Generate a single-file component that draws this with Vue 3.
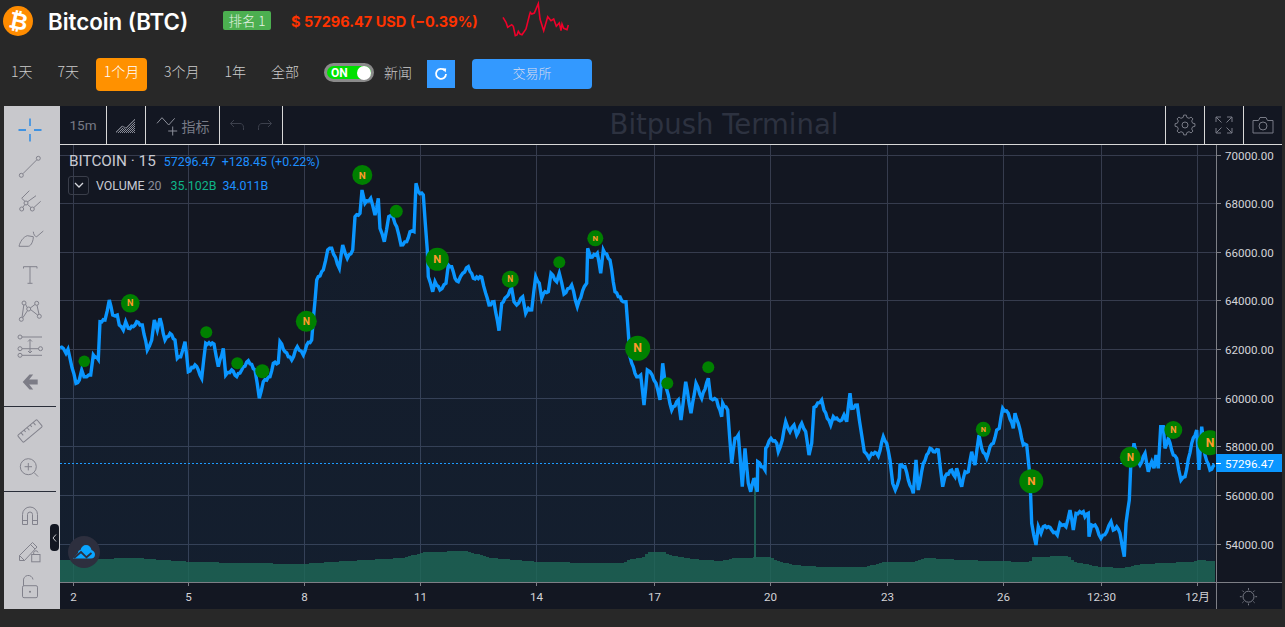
<script setup>
const z6 = [[0,533],[10,535],[18,550],[24,538],[30,565],[48,640],[58,630],[65,600],[72,620],[80,620],[92,615],[100,555],[115,568],[120,455],[135,450],[148,390],[158,435],[172,435],[178,465],[190,480],[197,455],[205,475],[220,470],[230,455],[240,465],[247,465],[262,540],[275,510],[283,450],[292,480],[300,445],[315,510],[330,490],[345,510],[352,565],[362,560],[375,515],[385,605],[405,585],[415,600],[425,625],[437,520],[462,522],[475,590],[490,535],[497,615],[515,600],[530,620],[545,600],[565,572],[585,600],[598,685],[610,635],[630,620],[640,580],[655,578],[660,515],[675,545],[695,570],[712,530],[730,555],[740,525],[755,510],[770,330],[790,300],[803,240],[815,235],[838,295],[848,225],[862,265],[878,240],[885,140]]
const z7 = [[60,130],[66,60],[75,100],[92,85],[105,135],[115,85],[120,175],[133,215],[146,140],[155,135],[170,170],[183,225],[200,215],[210,185],[222,185],[228,40],[235,65],[250,75],[262,240],[265,320],[278,365],[285,335],[300,360],[318,340],[325,285],[335,290],[345,325],[355,335],[368,310],[385,290],[400,325],[425,322],[437,370],[447,405],[462,395],[477,482],[485,400],[500,380],[515,355],[522,395],[530,405],[548,380],[557,430],[565,415],[575,420],[587,320],[598,340],[605,385],[615,365],[625,365],[633,310],[650,335],[658,310],[672,372],[695,345],[712,410],[733,350],[740,340],[743,235],[752,262],[772,250],[782,310],[790,240],[810,270],[825,365],[850,395],[858,395],[870,560],[885,610]]
const z8 = [[50,170],[62,165],[72,255],[82,150],[90,155],[108,190],[120,240],[128,130],[135,185],[155,270],[175,240],[183,300],[197,185],[213,280],[228,190],[245,235],[265,175],[272,235],[290,240],[305,290],[308,250],[323,270],[335,430],[345,355],[355,345],[367,500],[375,385],[385,490],[392,515],[402,475],[412,515],[413,425],[435,450],[437,385],[453,355],[470,370],[475,395],[487,360],[497,305],[510,335],[522,315],[530,345],[545,310],[557,335],[567,405],[575,370],[582,262],[605,240],[612,270],[632,315],[640,290],[655,300],[665,300],[672,285],[680,305],[690,220],[695,265],[712,255],[725,345],[733,395],[747,415],[755,400],[770,400],[775,408],[790,350],[800,370],[810,420],[818,490],[826,510],[838,475]]
const z9 = [[15,260],[25,300],[40,340],[48,240],[55,330],[70,250],[90,205],[100,215],[115,210],[128,320],[135,290],[155,270],[165,290],[170,265],[185,320],[195,275],[205,275],[215,215],[225,255],[237,165],[245,205],[260,235],[270,200],[280,190],[290,150],[298,145],[308,85],[325,100],[340,145],[345,100],[355,130],[370,195],[380,195],[388,270],[392,350],[395,430],[408,495],[415,440],[423,460],[430,440],[445,440],[455,450],[472,465],[480,430],[498,440],[510,390],[520,450],[528,400],[550,395],[555,410],[565,400],[567,470],[575,435],[585,435],[603,475],[620,455],[633,425],[640,450],[650,440],[660,460],[673,530],[678,430],[688,360],[692,260],[702,190],[712,240],[720,255],[735,220],[745,275],[755,245],[762,265],[768,225],[775,265],[782,140],[790,140],[795,205],[805,175],[820,225],[830,235],[843,300],[855,290],[875,190],[890,150],[897,270],[905,140],[915,225],[930,270],[945,255]]
const map = (pts, ox, oy) => pts.map(([x, y]) => [ox + x / 3, oy + y / 3])
const base = [
  ...map(z6, 60, 170), ...map(z7, 340, 170), ...map(z8, 620, 320),
  [900, 465], [905, 466.7], ...map(z9, 900, 380)
]
const line = []
let flip = 1
base.forEach((p, i) => {
  line.push(p)
  const q = base[i + 1]
  if (!q) return
  const dx = q[0] - p[0], dy = q[1] - p[1]
  const steps = Math.floor(dx / 1.6)
  for (let s = 1; s < steps; s++) {
    flip = -flip
    line.push([p[0] + (dx * s) / steps, p[1] + (dy * s) / steps + flip * 0.9])
  }
})
const fmt = (pts) => pts.map(([x, y]) => `${x.toFixed(1)},${y.toFixed(1)}`).join(' ')
const linePoints = fmt(line)
const areaPoints = fmt([[60, 582], ...base, [1215, 582]])

const volKeys = [[60,560],[90,559],[135,558],[190,562],[300,564],[345,561],[400,558],[425,552],[465,551],[490,558],[540,562],[600,563],[620,563.3],[630,559],[642,557],[647,552],[663,552],[667,555],[680,557],[690,559],[720,561],[733,558],[770,557],[773,560],[793,565],[823,567],[863,567],[883,562],[913,562],[920,559],[925,558],[960,560],[1028,562],[1032,557],[1067,556],[1073,562],[1100,567],[1123,568],[1133,565],[1160,563],[1190,562],[1197,560],[1215,561]]
const volAt = (x) => {
  for (let i = 1; i < volKeys.length; i++) {
    if (x <= volKeys[i][0]) {
      const [a, b] = volKeys[i - 1], [c, d] = volKeys[i]
      return b + (d - b) * (x - a) / (c - a)
    }
  }
  return 561
}
let vp = 'M60 582'
for (let x = 60; x < 1215; x += 3) {
  const y = Math.round(volAt(x))
  vp += ` L${x} ${y} L${x + 3} ${y}`
}
const volPath = vp + ' L1215 582 Z'

const hLines = [155.5, 203.5, 252.5, 300.5, 349.5, 398.5, 446.5, 495.5, 544.5]
const priceLabels = ['70000.00','68000.00','66000.00','64000.00','62000.00','60000.00','58000.00','56000.00','54000.00']
const times = [[73.5,'2'],[188.5,'5'],[304.5,'8'],[420.5,'11'],[536.5,'14'],[654.5,'17'],[770.5,'20'],[887.5,'23'],[1003.5,'26'],[1101.5,'12:30'],[1197.5,'12月']]

const markers = [
  [84.3,361.3,5.8,0],[130.3,303.3,9.3,1],[206.3,332.3,6,0],[237.3,363.3,6,0],[262.3,371.3,7,0],[306.3,321.3,10.5,1],
  [362.3,175,10,1],[396.3,211.3,6.5,0],[437.3,259.3,11.5,1],[510.3,279.3,8.5,1],[559.3,262.3,6,0],[595.3,238.3,8,1],[637.7,348.3,12.5,1],
  [667.3,383.3,6,0],[708.3,367.3,6,0],[983.3,429.3,7.5,1],[1031.3,481.3,12,1],[1130.3,457.3,10.5,1],[1173.3,430,9,1],[1210,442.7,12.5,1]
]

const spark = fmt([[36,55],[45,70],[50,85],[62,77],[67,82],[73,110],[78,108],[82,97],[87,105],[93,107],[105,90],[115,50],[118,40],[122,45],[130,42],[142,14],[147,60],[158,95],[170,53],[180,65],[188,60],[196,82],[205,72],[210,95],[213,75],[218,88],[228,92],[232,78]].map(([x, y]) => [x / 3, y / 3]))

const gearPath = (() => {
  let d = ''
  const n = 8
  for (let i = 0; i < n; i++) {
    const a = (i / n) * Math.PI * 2
    const pts = [[-0.24, 7.8], [-0.13, 10], [0.13, 10], [0.24, 7.8]]
    pts.forEach(([o, r], j) => {
      const t = a + o
      const x = 11 + r * Math.sin(t), y = 11 - r * Math.cos(t)
      d += `${i === 0 && j === 0 ? 'M' : 'L'}${x.toFixed(2)} ${y.toFixed(2)} `
    })
  }
  return d + 'Z'
})()
const rays = Array.from({ length: 8 }, (_, i) => {
  const a = (i / 8) * Math.PI * 2
  return [6.8 * Math.sin(a), 6.8 * Math.cos(a), 8.6 * Math.sin(a), 8.6 * Math.cos(a)]
})
const tabs = ['1天', '7天', '1个月', '3个月', '1年', '全部']
</script>

<template>
  <div class="page">
    <header class="title-row">
      <div class="logo"><span>₿</span></div>
      <h1 class="coin">Bitcoin (BTC)</h1>
      <span class="rank">排名 1</span>
      <span class="price">$ 57296.47 USD (−0.39%)</span>
      <svg class="spark" width="80" height="40" viewBox="0 0 80 40">
        <polyline :points="spark" fill="none" stroke="#f0002a" stroke-width="1.6" />
      </svg>
    </header>

    <nav class="tab-row">
      <span v-for="t in tabs" :key="t" class="tab" :class="{ active: t === '1个月' }">{{ t }}</span>
      <div class="toggle"><b>ON</b><i></i></div>
      <span class="news">新闻</span>
      <button class="refresh">
        <svg width="14" height="14" viewBox="0 0 14 14">
          <path d="M10.6 3.4 A5 5 0 1 0 12 7" fill="none" stroke="#fff" stroke-width="1.8" />
          <path d="M8 1.2 L12.2 1.6 L11.6 5.6 Z" fill="#fff" />
        </svg>
      </button>
      <button class="exchange">交易所</button>
    </nav>

    <section class="terminal">
      <aside class="tools">
        <div class="tool"><svg viewBox="0 0 28 28"><path d="M14 2.500V10M14 18V25.500M2.500 14H10M18 14H25.500" stroke="#1380e8" stroke-width="1.300" fill="none"/></svg></div>
        <div class="tool"><svg viewBox="0 0 28 28"><circle cx="5.300" cy="23.300" r="2"/><circle cx="22.300" cy="6.300" r="2"/><path d="M6.800 21.800L20.800 7.800"/></svg></div>
        <div class="tool"><svg viewBox="0 0 28 28"><circle cx="5.700" cy="21" r="2"/><circle cx="16.300" cy="21" r="2"/><circle cx="10" cy="15" r="2"/><path d="M6.800 19.300L8.800 16.600M11.500 16.400L15 19.600M11.600 13.800L20 7.700M5.700 10.300L13.300 2.700M5.700 10.300L9 13.400M17.800 19.600L24.700 13.300"/></svg></div>
        <div class="tool"><svg viewBox="0 0 28 28"><path d="M3 22.300H12.300C15.500 22 17.500 16 17.300 12.700L11.300 11.700C7 13 4 18 3 22.300ZM17.300 7.700C17.500 10.500 19 12.700 20.700 12.700L27.300 7"/></svg></div>
        <div class="tool"><svg viewBox="0 0 28 28"><path d="M7.500 6.700H21M14 6.700V23.300M11.500 23.300H16.500M7.500 6.700V8.500M21 6.700V8.500"/></svg></div>
        <div class="tool"><svg viewBox="0 0 28 28"><circle cx="5.300" cy="23.300" r="2"/><circle cx="23.300" cy="20.300" r="2"/><circle cx="8" cy="7" r="2"/><circle cx="20.700" cy="7.300" r="2"/><circle cx="12.700" cy="13" r="2"/><path d="M6 21.500L7.800 9M6.800 21.800L11.500 14.600M14.500 13.500L21.800 19.200M9.600 8.200L11.200 11.600M14.300 12L19.200 8.300M21 9.300L23 18.300"/></svg></div>
        <div class="tool"><svg viewBox="0 0 28 28"><circle cx="4" cy="5" r="2"/><circle cx="4" cy="16.700" r="2"/><circle cx="4" cy="23.300" r="2"/><circle cx="24.500" cy="16.700" r="2"/><path d="M6 5H26M6 16.700H22.500M6 23.300H26M14 7.500V21M12 9.500L14 7.500L16 9.500M12 19L14 21L16 19"/></svg></div>
        <div class="tool"><svg viewBox="0 0 28 28"><path class="solid" d="M6.700 14L13.500 6.500H17.200L13.200 11.500H21.700V16.500H13.200L17.200 21.500H13.500Z"/></svg></div>
        <hr class="sep" />
        <div class="tool"><svg viewBox="0 0 28 28"><g transform="rotate(-40 14 14)"><rect x="1.500" y="9.500" width="25" height="9" rx="1"/><path d="M6 9.500V13M10 9.500V12M14 9.500V13M18 9.500V12M22 9.500V13"/></g></svg></div>
        <div class="tool"><svg viewBox="0 0 28 28"><circle cx="12.300" cy="13.700" r="8"/><path d="M12.300 10V17.400M8.600 13.700H16M18 19.500L22 23.500"/></svg></div>
        <hr class="sep" />
        <div class="tool"><svg viewBox="0 0 28 28"><path d="M6.500 22.500V12.500A7.500 7.500 0 0 1 21.500 12.500V22.500H16.500V12.500A2.500 2.500 0 0 0 11.500 12.500V22.500ZM6.500 18.500H11.500M16.500 18.500H21.500"/></svg></div>
        <div class="tool"><svg viewBox="0 0 28 28"><path d="M3.500 22.500V17.500L16.500 4.500L21 9L8.500 22.500ZM3.500 17.500L8.500 22.500M14.500 6.500L19 11"/><rect x="15.700" y="16.500" width="8.300" height="7.300"/><path d="M17.700 16.500V14.500A2.200 2.200 0 0 1 22 14.500"/></svg></div>
        <div class="tool"><svg viewBox="0 0 28 28"><rect x="6.500" y="11.700" width="15" height="12" rx="1.500"/><path d="M7.500 11.700V7A4.800 4.800 0 0 1 17 5.500"/><circle class="solid" cx="14" cy="17.700" r="1"/></svg></div>
      </aside>

      <div class="main">
        <div class="topbar">
          <div class="cell interval">15m</div>
          <div class="cell chart-type">
            <svg width="22" height="16" viewBox="0 0 22 16">
              <defs>
                <pattern id="hatch" width="2" height="2" patternUnits="userSpaceOnUse">
                  <rect width="1" height="1" fill="#8a8d98" />
                  <rect x="1" y="1" width="1" height="1" fill="#8a8d98" />
                </pattern>
              </defs>
              <path d="M1 15L7 9L11 11L20 2" fill="none" stroke="#787b86" stroke-width="1"/>
              <path d="M1 16L7 10L11 12L20 3V16Z" fill="url(#hatch)"/>
            </svg>
          </div>
          <div class="cell indicators">
            <svg width="22" height="20" viewBox="0 0 22 20">
              <path d="M1 7.300L6 1.700L12.700 9L18.700 2.300" fill="none" stroke="#8c8f9a" stroke-width="1"/>
              <path d="M12.200 15H21.200M16.700 10.500V19.500" fill="none" stroke="#8c8f9a" stroke-width="1"/>
            </svg>
            <span>指标</span>
          </div>
          <div class="cell history">
            <svg width="16" height="14" viewBox="0 0 16 14"><path d="M5 2L1.500 5.500L5 9M1.500 5.500H11C13 5.500 14.500 7 14.500 9.500V12" fill="none" stroke="#3c404c"/></svg>
            <svg width="16" height="14" viewBox="0 0 16 14"><path d="M11 2L14.500 5.500L11 9M14.500 5.500H5C3 5.500 1.500 7 1.500 9.500V12" fill="none" stroke="#3c404c"/></svg>
          </div>
          <div class="watermark">Bitpush Terminal</div>
          <div class="cell action">
            <svg width="22" height="22" viewBox="0 0 22 22"><path :d="gearPath" fill="none" stroke="#787b86"/><circle cx="11" cy="11" r="3" fill="none" stroke="#787b86"/></svg>
          </div>
          <div class="cell action">
            <svg width="18" height="18" viewBox="0 0 18 18"><path d="M1 6V1H6M1 1L6.500 6.500M12 1H17V6M17 1L11.500 6.500M17 12V17H12M17 17L11.500 11.500M6 17H1V12M1 17L6.500 11.500" fill="none" stroke="#787b86"/></svg>
          </div>
          <div class="cell action">
            <svg width="22" height="18" viewBox="0 0 22 18"><path d="M1 4.500H6.500L8 1.500H14L15.500 4.500H21V17H1Z" fill="none" stroke="#787b86"/><circle cx="11" cy="10" r="4" fill="none" stroke="#787b86"/></svg>
          </div>
        </div>

        <div class="plot">
          <svg class="canvas" viewBox="60 145 1222 464" width="1222" height="464">
            <defs>
              <linearGradient id="areaFill" x1="0" y1="0" x2="0" y2="1">
                <stop offset="0" stop-color="#2196f3" stop-opacity=".04" />
                <stop offset="1" stop-color="#2196f3" stop-opacity=".06" />
              </linearGradient>
              <clipPath id="plotClip"><rect x="60" y="145" width="1155.500" height="437" /></clipPath>
            </defs>
            <g stroke="#363c4e" stroke-width="1">
              <line v-for="y in hLines" :key="y" x1="60" x2="1216" :y1="y" :y2="y" />
              <line v-for="t in times" :key="t[1]" :x1="t[0]" :x2="t[0]" y1="145" y2="582" />
            </g>
            <g clip-path="url(#plotClip)">
              <polygon :points="areaPoints" fill="url(#areaFill)" />
              <path :d="volPath" fill="rgb(30,105,88)" fill-opacity=".8" />
              <rect x="754" y="477" width="2" height="82" fill="#1f5f54" />
              <line x1="60" x2="1216" y1="463.500" y2="463.500" stroke="#1e9bff" stroke-dasharray="2 2" />
              <polyline :points="linePoints" fill="none" stroke="#0a96ff" stroke-width="3.400" stroke-linejoin="miter" stroke-miterlimit="4" />
              <g v-for="(m, i) in markers" :key="i">
                <circle :cx="m[0]" :cy="m[1]" :r="m[2]" fill="#008000" />
                <text v-if="m[3]" :x="m[0]" :y="m[1]" class="n" :font-size="m[2] * 0.98" text-anchor="middle" dominant-baseline="central">N</text>
              </g>
            </g>
            <path d="M1216.500 145V609M60 582.500H1282" stroke="#7d7f86" fill="none" />
            <g stroke="#7d7f86">
              <line v-for="y in hLines" :key="'t' + y" x1="1216" x2="1221" :y1="y" :y2="y" />
              <line v-for="t in times" :key="'k' + t[1]" :x1="t[0]" :x2="t[0]" y1="582" y2="586" />
            </g>
            <text v-for="(p, i) in priceLabels" :key="p" x="1225" :y="hLines[i] + 0.5" class="axis" dominant-baseline="central">{{ p }}</text>
            <text v-for="t in times" :key="'l' + t[1]" :x="t[0]" y="596.500" class="axis" text-anchor="middle" dominant-baseline="central">{{ t[1] }}</text>
            <rect x="1216" y="454" width="66" height="18" fill="#0a96ff" />
            <line x1="1216" x2="1221" y1="463.500" y2="463.500" stroke="#fff" />
            <text x="1225" y="463.500" class="axis tag" dominant-baseline="central">57296.47</text>
            <g transform="translate(1248.500 596.700)" fill="none" stroke="#787b86">
              <circle r="5.500" />
              <line v-for="(r, i) in rays" :key="i" :x1="r[0]" :y1="r[1]" :x2="r[2]" :y2="r[3]" />
            </g>
          </svg>

          <div class="legend">
            <div class="legend-main">
              <span class="symbol">BITCOIN · 15</span>
              <span class="vals">57296.47</span>
              <span class="vals">+128.45</span>
              <span class="vals tight">(+0.22%)</span>
            </div>
            <div class="legend-vol">
              <span class="chev"><svg width="10" height="6" viewBox="0 0 10 6"><path d="M1 1L5 5L9 1" fill="none" stroke="#d6d8de" stroke-width="1.300"/></svg></span>
              <span class="vol-name">VOLUME <em>20</em></span>
              <span class="up">35.102B</span>
              <span class="vals">34.011B</span>
            </div>
          </div>

          <div class="brand">
            <svg width="22" height="14" viewBox="0 0 22 14">
              <path d="M0 13.500L5 8C5 6 6 5 7.500 5C8 2 10.500 0 13 0C16 0 18 2 18.500 5C20.500 5.500 22 7.500 22 9.500C22 12 20.500 13.500 18 13.500Z" fill="#0aa5ff"/>
              <path d="M1 13L8 7L13.500 12.300L18.500 8" fill="none" stroke="#2d2f3e" stroke-width="1.800"/>
            </svg>
          </div>
          <div class="collapse">
            <svg width="5" height="8" viewBox="0 0 5 8"><path d="M4 0.500L1 4L4 7.500" fill="none" stroke="#c8c8cc"/></svg>
          </div>
        </div>
      </div>
    </section>
  </div>
</template>

<style scoped>
.page {
  width: 1285px;
  height: 627px;
  overflow: hidden;
  background: #282828;
  font-family: "Noto Sans CJK SC", "Noto Sans", sans-serif;
  color: #ccc;
}
.title-row {
  height: 42px;
  display: flex;
  align-items: center;
  padding-left: 3px;
}
.logo {
  width: 30px;
  height: 30px;
  border-radius: 50%;
  background: #ff8c00;
  display: flex;
  align-items: center;
  justify-content: center;
  color: #fff;
  font: bold 23px "DejaVu Sans", sans-serif;
}
.logo span { transform: rotate(12deg); }
.coin {
  margin: 0 0 0 15px;
  width: 175px;
  font: 600 22.3px Inter, sans-serif;
  color: #fff;
  white-space: nowrap;
}
.rank {
  width: 48px;
  height: 19px;
  margin-top: -1px;
  border-radius: 2px;
  background: #4caf50;
  color: #e6f2e6;
  font-size: 13.5px;
  font-weight: 300;
  line-height: 19px;
  text-align: center;
}
.price {
  margin-left: 20px;
  width: 190px;
  font: 700 14.5px Inter, sans-serif;
  color: #ff3300;
  white-space: nowrap;
}
.spark { position: relative; left: 10px; margin-top: -1px; align-self: flex-start; }
.tab-row {
  height: 64px;
  display: flex;
  align-items: center;
  font-size: 14px;
  font-weight: 300;
}
.tab {
  padding: 0 8px;
  height: 33px;
  line-height: 27px;
  margin-right: 9px;
  color: #ccc;
  white-space: nowrap;
  box-sizing: border-box;
  border-radius: 4px;
}
.tab:first-child { margin-left: 3px; }
.tab.active {
  background: #ff9100;
  color: #fff;
  width: 51px;
  padding: 0;
  text-align: center;
}
.toggle {
  margin-left: 8px;
  width: 50px;
  height: 19px;
  box-sizing: border-box;
  border: 3px solid #8a8a8a;
  border-radius: 10px;
  background: #00e000;
  display: flex;
  align-items: center;
  justify-content: space-between;
  padding-left: 4px;
  margin-top: -3px;
}
.toggle b { font: bold 12px Roboto, sans-serif; color: #fff; }
.toggle i {
  width: 14px;
  height: 14px;
  border-radius: 50%;
  background: #fff;
  display: block;
}
.news { margin-left: 10px; margin-top: -5px; }
.refresh {
  margin-left: 15px;
  width: 28px;
  height: 28px;
  border: 0;
  padding: 0;
  background: #3399ff;
  display: flex;
  align-items: center;
  justify-content: center;
}
.exchange {
  margin-left: 17px;
  width: 120px;
  height: 30px;
  border: 0;
  border-radius: 4px;
  padding: 0 0 3px;
  background: #3399ff;
  color: #dde;
  font: 300 13px "Noto Sans CJK SC", sans-serif;
}
.terminal {
  margin-left: 4px;
  width: 1278px;
  height: 503px;
  display: flex;
}
.tools {
  width: 56px;
  flex: none;
  background: #c8c8cc;
  padding-top: 6px;
  box-sizing: border-box;
}
.tool {
  height: 36px;
  padding-right: 4px;
  display: flex;
  align-items: center;
  justify-content: center;
}
.tool svg { width: 28px; height: 28px; fill: none; stroke: #82828c; stroke-width: 1; }
.tool svg .solid { fill: #7c7c86; stroke: none; }
.sep {
  height: 1px;
  margin: 6px 4px 6px 0;
  border: 0;
  background: #2a2e39;
}
.main {
  flex: 1;
  min-width: 0;
  display: flex;
  flex-direction: column;
  background: #131722;
}
.topbar {
  height: 39px;
  flex: none;
  box-sizing: border-box;
  border-bottom: 1px solid #d8d8d8;
  display: flex;
  align-items: stretch;
}
.cell {
  display: flex;
  align-items: center;
  justify-content: center;
  box-sizing: border-box;
  border-right: 1px solid #d8d8d8;
  color: #787b86;
  font: 14px Roboto, "Noto Sans CJK SC", sans-serif;
}
.interval { width: 47px; font-size: 13.5px; }
.chart-type { width: 39px; }
.indicators { width: 74px; gap: 4px; padding-top: 1px; }
.history { width: 63px; gap: 12px; }
.watermark {
  flex: 1;
  text-align: center;
  font: 27.5px/37px "DejaVu Sans", sans-serif;
  color: #2d3240;
}
.action { width: 39px; border-right: 0; border-left: 1px solid #d8d8d8; }
.plot {
  position: relative;
  flex: 1;
  min-height: 0;
}
.canvas { display: block; }
.axis {
  font: 11.6px Roboto, "Noto Sans CJK SC", sans-serif;
  fill: #d4d4d8;
}
.axis.tag { fill: #fff; }
.n {
  font-family: Roboto, sans-serif;
  font-weight: 700;
  fill: #ff9a2e;
}
.legend {
  position: absolute;
  left: 9px;
  top: 6px;
  font: 12.4px Roboto, sans-serif;
  white-space: nowrap;
}
.legend-main { display: flex; align-items: center; gap: 6px; height: 20px; }
.symbol { font-size: 15.3px; color: #c8cad2; margin-right: 2px; }
.vals { color: #1e90ff; }
.vals.tight { margin-left: -2px; }
.legend-vol { display: flex; align-items: center; height: 20px; margin-top: 4px; margin-left: -1px; }
.chev {
  width: 21px;
  height: 19px;
  margin-right: 7px;
  box-sizing: border-box;
  border: 1px solid #3a3e4a;
  border-radius: 3px;
  display: flex;
  align-items: center;
  justify-content: center;
}
.vol-name { color: #c8cad2; margin-right: 9px; }
.vol-name em { font-style: normal; color: #8a8d98; }
.up { color: #0fb488; margin-right: 6px; }
.brand {
  position: absolute;
  left: 8px;
  top: 391px;
  width: 32px;
  height: 32px;
  border-radius: 50%;
  background: #2d2f3e;
  display: flex;
  align-items: center;
  justify-content: center;
}
.collapse {
  position: absolute;
  left: -10px;
  top: 379px;
  width: 9px;
  height: 27px;
  border-radius: 4px;
  background: #131722;
  display: flex;
  align-items: center;
  justify-content: center;
}
</style>

<style>
html, body { margin: 0; background: #282828; }
</style>
